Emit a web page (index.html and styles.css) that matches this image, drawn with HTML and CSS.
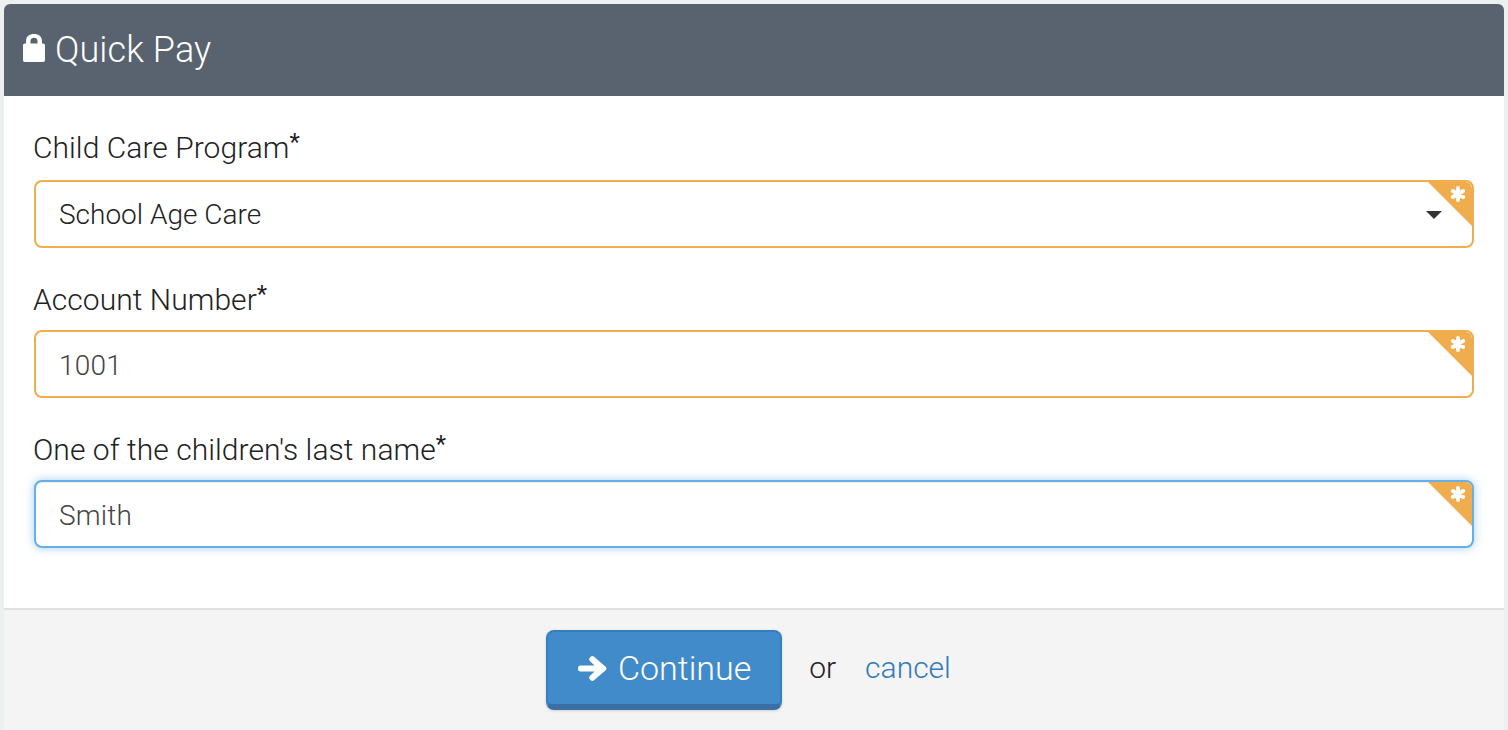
FILE: index.html
```html
<!DOCTYPE html>
<html lang="en">
<head>
<meta charset="utf-8">
<title>Quick Pay</title>
<link rel="stylesheet" href="styles.css">
</head>
<body>
<main class="card">
  <header class="card-head">
    <svg class="lock" viewBox="0 0 24 30" aria-hidden="true"><path fill="#fff" d="M4 10.500V8C4 3.500 7.400 1 12 1s8 2.500 8 7v2.500h1c1.300 0 2 .8 2 2v14.500c0 1.300-.7 2-2 2H3c-1.300 0-2-.7-2-2V12.500c0-1.200.7-2 2-2zm4.500 0h7V8c0-2-1.400-3.200-3.500-3.200S8.500 6 8.500 8z"/></svg>
    <h1>Quick Pay</h1>
  </header>
  <form class="card-body">
    <div class="field">
      <label class="label">Child Care Program<sup>*</sup></label>
      <div class="control warn">
        <span class="value select">School Age Care</span>
        <span class="caret"></span>
        <span class="corner"></span>
        <svg class="star" viewBox="0 0 16 16" aria-hidden="true"><path d="M8 2v12M2.800 5l10.400 6M13.200 5 2.800 11"/></svg>
      </div>
    </div>
    <div class="field">
      <label class="label">Account Number<sup>*</sup></label>
      <div class="control warn">
        <span class="value">1001</span>
        <span class="corner"></span>
        <svg class="star" viewBox="0 0 16 16" aria-hidden="true"><path d="M8 2v12M2.800 5l10.400 6M13.200 5 2.800 11"/></svg>
      </div>
    </div>
    <div class="field">
      <label class="label">One of the children's last name<sup>*</sup></label>
      <div class="control focus">
        <span class="value">Smith</span>
        <span class="corner"></span>
        <svg class="star" viewBox="0 0 16 16" aria-hidden="true"><path d="M8 2v12M2.800 5l10.400 6M13.200 5 2.800 11"/></svg>
      </div>
    </div>
  </form>
  <footer class="card-foot">
    <a class="btn" href="#">
      <svg class="arrow" viewBox="0 0 30 28" aria-hidden="true"><path fill="#fff" d="M16.500 2.600 27.700 12.200c1.100 1 1.100 2.600 0 3.600L16.500 25.400c-1 .9-2.300.9-3.200 0l-.9-.9c-.9-.9-.9-2.300 0-3.200l4.600-4.300H3.300C1.900 17 1 16 1 14.800v-1.600C1 12 1.900 11 3.300 11h13.700l-4.600-4.300c-.9-.9-.9-2.300 0-3.200l.9-.9c.9-.9 2.200-.9 3.200 0z"/></svg>
      <span>Continue</span>
    </a>
    <span class="or">or</span>
    <a class="cancel" href="#">cancel</a>
  </footer>
</main>
</body>
</html>
```
FILE: styles.css
```css
* { box-sizing: border-box; }
html, body { height: 100%; }
body {
  margin: 0;
  padding: 4px 4px 0;
  background: #ecf0f1;
  font-family: Roboto, "Liberation Sans", sans-serif;
  overflow: hidden;
}
.card {
  height: 726px;
  background: #fff;
  border-radius: 6px 6px 0 0;
  overflow: hidden;
  display: flex;
  flex-direction: column;
}
.card-head {
  height: 92px;
  background: #58636f;
  color: #fff;
  display: flex;
  align-items: center;
  padding-left: 18px;
  gap: 9px;
}
.lock { width: 24px; height: 30px; margin-top: -4px; }
.card-head h1 {
  margin: 0;
  font-size: 36px;
  font-weight: 300;
  line-height: 44px;
  letter-spacing: 0.1px;
}
.card-body {
  height: 512px;
  padding: 32px 30px 0;
  display: flex;
  flex-direction: column;
  gap: 32px;
}
.field { display: flex; flex-direction: column; gap: 10px; }
.field:first-child .label { margin-bottom: 2px; }
.label {
  font-size: 30px;
  font-weight: 300;
  line-height: 40px;
  height: 40px;
  color: #222;
  margin-left: -1px;
  letter-spacing: 0.05px;
}
.label sup { font-size: 24px; font-weight: 400; line-height: 0; vertical-align: 8px; }
.control {
  position: relative;
  height: 68px;
  background: #fff;
  border: 2px solid #f0ad4e;
  border-radius: 8px;
  display: flex;
  align-items: center;
  padding-left: 23px;
  overflow: hidden;
}
.control.focus {
  border-color: #66afe9;
  overflow: visible;
  box-shadow: 0 0 10px rgba(102, 175, 233, .6), inset 0 1px 1px rgba(0, 0, 0, .075);
}
.value {
  font-size: 28px;
  font-weight: 300;
  color: #444;
  line-height: 40px;
  letter-spacing: 0.2px;
  padding-top: 4px;
}
.value.select { color: #222; letter-spacing: 0; padding-top: 2px; }
.caret {
  position: absolute;
  right: 30px;
  top: 29px;
  width: 0;
  height: 0;
  border-left: 8px solid transparent;
  border-right: 8px solid transparent;
  border-top: 8px solid #333;
}
.corner {
  position: absolute;
  top: 0;
  right: 0;
  width: 0;
  height: 0;
  border-top: 44px solid #f0ad4e;
  border-left: 44px solid transparent;
  border-top-right-radius: 6px;
}
.star {
  position: absolute;
  top: 4px;
  right: 6px;
  width: 16px;
  height: 16px;
  fill: none;
  stroke: #fff;
  stroke-width: 3.8;
  stroke-linecap: round;
}
.card-foot {
  flex: 1;
  background: #f4f4f4;
  border-top: 2px solid #e1e1e1;
  display: flex;
  align-items: flex-start;
  justify-content: center;
  padding-top: 20px;
  padding-right: 11px;
  font-size: 30px;
}
.btn {
  width: 236px;
  height: 80px;
  background: #428bca;
  border: 2px solid #3a7fbd;
  border-top-color: #357ebd;
  border-bottom: 6px solid #3a6ea5;
  border-radius: 8px;
  color: #fff;
  text-decoration: none;
  display: flex;
  align-items: center;
  justify-content: center;
  gap: 10px;
  font-size: 34px;
  font-weight: 300;
  box-shadow: 0 1px 3px rgba(0, 0, 0, .15);
}
.arrow { width: 31px; height: 31px; }
.or { color: #222; margin-left: 27px; line-height: 76px; font-weight: 300; }
.cancel { color: #337ab7; margin-left: 29px; line-height: 76px; text-decoration: none; font-weight: 300; }
```
